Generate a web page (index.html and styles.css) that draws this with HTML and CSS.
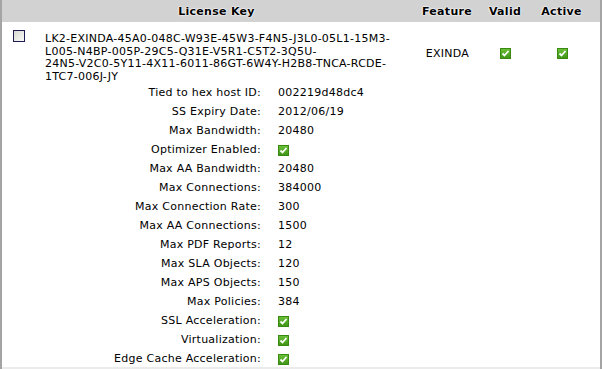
FILE: index.html
```html
<!DOCTYPE html>
<html>
<head>
<meta charset="utf-8">
<link rel="stylesheet" href="styles.css">
</head>
<body>
<div class="panel">
  <div class="row head">
    <div class="c"></div>
    <div class="c key-h">License Key</div>
    <div class="c mid">Feature</div>
    <div class="c mid">Valid</div>
    <div class="c mid">Active</div>
    <div class="c"></div>
  </div>
  <div class="row main">
    <div class="c chk-cell"><span class="box"></span></div>
    <div class="c key">LK2-EXINDA-45A0-048C-W93E-45W3-F4N5-J3L0-05L1-15M3-<br>L005-N4BP-005P-29C5-Q31E-V5R1-C5T2-3Q5U-<br>24N5-V2C0-5Y11-4X11-6011-86GT-6W4Y-H2B8-TNCA-RCDE-<br>1TC7-006J-JY</div>
    <div class="c mid vm">EXINDA</div>
    <div class="c mid vm"><svg class="ok" viewBox="0 0 11 11"><use href="#ok"/></svg></div>
    <div class="c mid vm"><svg class="ok" viewBox="0 0 11 11"><use href="#ok"/></svg></div>
    <div class="c"></div>
  </div>
  <div class="details">
    <div class="lbl">Tied to hex host ID:</div><div class="val">002219d48dc4</div>
    <div class="lbl">SS Expiry Date:</div><div class="val">2012/06/19</div>
    <div class="lbl">Max Bandwidth:</div><div class="val">20480</div>
    <div class="lbl">Optimizer Enabled:</div><div class="val"><svg class="ok" viewBox="0 0 11 11"><use href="#ok"/></svg></div>
    <div class="lbl">Max AA Bandwidth:</div><div class="val">20480</div>
    <div class="lbl">Max Connections:</div><div class="val">384000</div>
    <div class="lbl">Max Connection Rate:</div><div class="val">300</div>
    <div class="lbl">Max AA Connections:</div><div class="val">1500</div>
    <div class="lbl">Max PDF Reports:</div><div class="val">12</div>
    <div class="lbl">Max SLA Objects:</div><div class="val">120</div>
    <div class="lbl">Max APS Objects:</div><div class="val">150</div>
    <div class="lbl">Max Policies:</div><div class="val">384</div>
    <div class="lbl">SSL Acceleration:</div><div class="val"><svg class="ok" viewBox="0 0 11 11"><use href="#ok"/></svg></div>
    <div class="lbl">Virtualization:</div><div class="val"><svg class="ok" viewBox="0 0 11 11"><use href="#ok"/></svg></div>
    <div class="lbl">Edge Cache Acceleration:</div><div class="val"><svg class="ok" viewBox="0 0 11 11"><use href="#ok"/></svg></div>
  </div>
</div>
<svg width="0" height="0" class="defs">
  <defs>
    <linearGradient id="g" x1="0" y1="0" x2="0" y2="1">
      <stop offset="0" stop-color="#6cc23a"/>
      <stop offset="1" stop-color="#3d9314"/>
    </linearGradient>
    <symbol id="ok" viewBox="0 0 11 11">
      <rect x="0.5" y="0.5" width="10" height="10" fill="url(#g)" stroke="#3a8a12"/>
      <path d="M2.5 5.5 L4.5 7.5 L8.5 3" fill="none" stroke="#fff" stroke-width="1.8"/>
    </symbol>
  </defs>
</svg>
</body>
</html>
```
FILE: styles.css
```css
html, body {
  margin: 0;
  padding: 0;
  background: #fff;
}
body {
  font-family: "DejaVu Sans", Verdana, sans-serif;
  font-size: 11px;
  color: #000;
  letter-spacing: 0.25px;
}
.panel {
  width: 598px;
  height: 369px;
  border-left: 2px solid #a4a4a4;
  border-right: 2px solid #a4a4a4;
  overflow: hidden;
}
.row {
  display: grid;
  grid-template-columns: 35px 383px 54px 62px 51px 13px;
}
.head {
  height: 22px;
  background: #d2d2d2;
  font-weight: bold;
  line-height: 23px;
  letter-spacing: 0.3px;
  text-shadow: 0 0 2px #fff, 0 0 2px #fff, 0 0 1px #fff;
}
.key-h {
  text-align: center;
  padding-right: 24px;
}
.mid {
  text-align: center;
  white-space: nowrap;
}
.main {
  height: 60px;
}
.vm {
  display: flex;
  align-items: center;
  justify-content: center;
  padding-left: 1px;
  padding-top: 3px;
}
.chk-cell {
  padding: 8px 0 0 11px;
}
.box {
  display: block;
  width: 10px;
  height: 10px;
  border: 1px solid #1c1c52;
  background: linear-gradient(135deg, #d8d8d0, #fbfbf8);
}
.key {
  padding: 11px 0 0 8px;
  line-height: 12.7px;
  white-space: nowrap;
  height: 60px;
  box-sizing: border-box;
}
.details {
  display: grid;
  grid-template-columns: 259px auto;
  column-gap: 17px;
  grid-auto-rows: 19px;
  border-bottom: 2px solid #ebebeb;
}
.lbl {
  text-align: right;
  padding-top: 3px;
  line-height: 16px;
  white-space: nowrap;
}
.val {
  padding-top: 3px;
  line-height: 16px;
  display: flex;
  align-items: center;
}
.ok {
  width: 11px;
  height: 11px;
  display: block;
}
.defs {
  position: absolute;
}
```
